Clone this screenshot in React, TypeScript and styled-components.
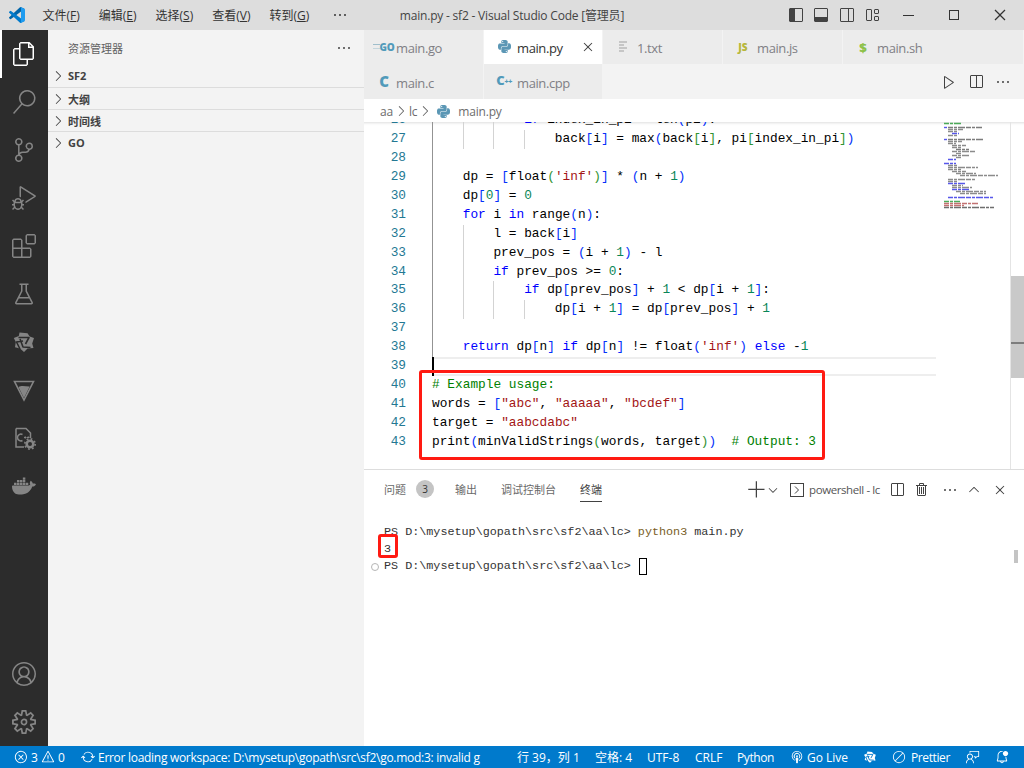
import React from 'react'
import styled, { createGlobalStyle } from 'styled-components'
import {
  VscFiles, VscSearch, VscSourceControl, VscDebugAlt, VscExtensions, VscBeaker, VscAccount,
  VscSettingsGear, VscLayoutSidebarLeft, VscLayoutPanel, VscLayoutSidebarRightOff, VscLayout,
  VscChromeMinimize, VscChromeMaximize, VscChromeClose, VscClose, VscEllipsis, VscChevronRight,
  VscChevronDown, VscChevronUp, VscAdd, VscTrash, VscPlay, VscSplitHorizontal,
  VscError, VscWarning, VscSync, VscBroadcast, VscFeedback, VscBellDot, VscCircleSlash,
} from 'react-icons/vsc'
import { SiPython, SiDocker } from 'react-icons/si'

const UI_FONT = `"Open Sans", "Noto Sans CJK SC", sans-serif`
const MONO_FONT = `"Liberation Mono", "Noto Sans CJK SC", monospace`
const CHAR = 7.68

const GlobalStyle = createGlobalStyle`
  html, body { margin: 0; padding: 0; background: #fff; }
  * { box-sizing: border-box; }
`

const Shell = styled.div`
  display: flex;
  flex-direction: column;
  width: 1024px;
  height: 768px;
  overflow: hidden;
  font-family: ${UI_FONT};
`

const TitleBar = styled.div`
  display: flex;
  align-items: center;
  height: 30px;
  flex: none;
  background: #dddddd;
  color: #333;
  font-size: 12px;
`

const Logo = styled.svg`
  width: 16px;
  height: 16px;
  margin-left: 9px;
  margin-right: 8px;
  flex: none;
`

const MenuItem = styled.div`
  padding: 0 9.5px;
  white-space: nowrap;
  u { text-underline-offset: 1px; }
`

const MenuMore = styled(VscEllipsis)`
  width: 16px;
  height: 16px;
  margin-left: 13px;
  margin-right: 52px;
`

const WindowTitle = styled.div`
  width: 383px;
  white-space: nowrap;
  letter-spacing: -0.2px;
  color: #444;
`

const LayoutIcon = styled.div`
  display: flex;
  width: 25.5px;
  justify-content: center;
  color: #424242;
  svg { width: 16px; height: 16px; }
`

const WindowButton = styled.div`
  display: flex;
  width: 46px;
  justify-content: center;
  color: #333;
  svg { width: 16px; height: 16px; }
`

const Body = styled.div`
  display: flex;
  flex: 1;
  min-height: 0;
`

const ActivityBar = styled.div`
  display: flex;
  flex-direction: column;
  width: 48px;
  flex: none;
  background: #2c2c2c;
`

const ActivitySpacer = styled.div`
  flex: 1;
`

const ActivityItem = styled.div<{ $active?: boolean }>`
  display: flex;
  align-items: center;
  justify-content: center;
  width: 48px;
  height: 48px;
  flex: none;
  color: ${p => (p.$active ? '#ffffff' : '#858585')};
  border-left: 2px solid ${p => (p.$active ? '#ffffff' : 'transparent')};
  padding-right: 2px;
  svg { width: 24px; height: 24px; }
`

const Sidebar = styled.div`
  display: flex;
  flex-direction: column;
  width: 316px;
  flex: none;
  background: #f3f3f3;
  color: #616161;
`

const SidebarHeader = styled.div`
  display: flex;
  align-items: center;
  justify-content: space-between;
  height: 35px;
  padding-left: 20px;
  padding-right: 12px;
  font-size: 11px;
  svg { width: 16px; height: 16px; color: #424242; }
`

const SectionRow = styled.div<{ $first?: boolean }>`
  display: flex;
  align-items: center;
  height: 22px;
  padding-left: 2px;
  padding-bottom: ${p => (p.$first ? 2 : 0)}px;
  font-size: 11px;
  font-weight: 700;
  color: #424242;
  border-top: 1px solid ${p => (p.$first ? 'transparent' : '#dcdcdc')};
  svg { width: 16px; height: 16px; margin-right: 2px; margin-top: 1px; }
`

const Main = styled.div`
  display: flex;
  flex-direction: column;
  flex: 1;
  min-width: 0;
`

const TabRow = styled.div<{ $h: number }>`
  display: flex;
  height: ${p => p.$h}px;
  flex: none;
  background: #f3f3f3;
`

const Tab = styled.div<{ $active?: boolean; $w?: number }>`
  display: flex;
  align-items: center;
  width: ${p => p.$w ?? 120}px;
  flex: none;
  padding-left: 12px;
  padding-top: 2px;
  font-size: 13px;
  letter-spacing: -0.4px;
  color: ${p => (p.$active ? '#333333' : '#7f7f85')};
  background: ${p => (p.$active ? '#ffffff' : '#ececec')};
  border-right: 1px solid #f3f3f3;
  white-space: nowrap;
`

const TabIconBox = styled.span<{ $mr?: number }>`
  display: inline-flex;
  align-items: center;
  justify-content: center;
  width: 16px;
  height: 16px;
  margin-right: ${p => p.$mr ?? 6}px;
  margin-top: -3px;
  flex: none;
  font-weight: 800;
  letter-spacing: 0;
`

const GoGlyph = styled.span`
  display: inline-flex;
  align-items: center;
  flex: none;
  font-size: 10px;
  font-weight: 800;
  color: #519aba;
  letter-spacing: -0.2px;
  margin-left: -1px;
  &::before {
    content: '';
    width: 7px;
    height: 3px;
    border-top: 1px solid #9fbecb;
    border-bottom: 1px solid #c3d5dc;
  }
`

const LetterGlyph = styled.span<{ $color: string; $size: number }>`
  color: ${p => p.$color};
  font-size: ${p => p.$size}px;
  line-height: 16px;
  white-space: nowrap;
`

const PlusSup = styled.span`
  font-size: 7px;
  position: relative;
  top: -1px;
  letter-spacing: -0.5px;
`

const TabClose = styled(VscClose)`
  width: 16px;
  height: 16px;
  margin-left: auto;
  margin-right: 6px;
  margin-top: -3px;
  color: #424242;
`

const EditorActions = styled.div`
  display: flex;
  flex: 1;
  align-items: center;
  justify-content: flex-end;
  gap: 11px;
  padding-right: 13px;
  color: #424242;
  svg { width: 16px; height: 16px; }
`

const Breadcrumb = styled.div`
  display: flex;
  align-items: center;
  height: 23px;
  flex: none;
  padding-left: 16px;
  padding-top: 1px;
  font-size: 12px;
  letter-spacing: -0.2px;
  color: #6c6c6c;
  background: #fff;
  svg { width: 16px; height: 16px; color: #616161; }
`

const CrumbPython = styled(SiPython)`
  && { width: 13px; height: 13px; color: #5b97b5; margin: 0 8px 0 4px; }
`

const Editor = styled.div`
  position: relative;
  display: flex;
  flex: 1;
  min-height: 0;
  background: #fff;
  overflow: hidden;
  box-shadow: inset 0 4px 3px -3px #dddddd;
`

const CodeColumn = styled.div`
  width: 572px;
  flex: none;
  margin-top: -11px;
  font-family: ${MONO_FONT};
  font-size: 12.8px;
`

const CodeLine = styled.div`
  display: flex;
  height: 18.94px;
  line-height: 18.94px;
  white-space: pre;
  position: relative;
`

const LineNo = styled.div`
  width: 42px;
  flex: none;
  text-align: right;
  color: #237893;
`

const GutterGap = styled.div`
  width: 26px;
  flex: none;
`

const CodeText = styled.div<{ $guides: number; $dark?: boolean; $current?: boolean }>`
  flex: 1;
  color: #000;
  background-repeat: no-repeat;
  background-image:
    ${p => (p.$dark ? 'linear-gradient(#939393, #939393)' : 'linear-gradient(transparent, transparent)')},
    ${p => (p.$guides > 1 ? 'linear-gradient(#d3d3d3, #d3d3d3)' : 'linear-gradient(transparent, transparent)')},
    ${p => (p.$guides > 2 ? 'linear-gradient(#d3d3d3, #d3d3d3)' : 'linear-gradient(transparent, transparent)')},
    ${p => (p.$guides > 3 ? 'linear-gradient(#d3d3d3, #d3d3d3)' : 'linear-gradient(transparent, transparent)')};
  background-size: 1px 100%;
  background-position: 0 0, ${CHAR * 4}px 0, ${CHAR * 8}px 0, ${CHAR * 12}px 0;
  ${p => p.$current && `
    border-top: 2px solid #eeeeee;
    border-bottom: 2px solid #eeeeee;
    line-height: 15px;
  `}
`

const Cursor = styled.div`
  position: absolute;
  left: 68px;
  top: 0;
  width: 2px;
  height: 19px;
  background: #000;
`

const Callout = styled.div<{ $l: number; $t: number; $w: number; $h: number }>`
  position: absolute;
  left: ${p => p.$l}px;
  top: ${p => p.$t}px;
  width: ${p => p.$w}px;
  height: ${p => p.$h}px;
  border: 3px solid #ff1a12;
  border-radius: 3px;
  pointer-events: none;
`

const Minimap = styled.svg`
  width: 74px;
  height: 100px;
  flex: none;
`

const ScrollTrack = styled.div`
  position: relative;
  flex: none;
  width: 14px;
  margin-left: auto;
  border-left: 1px solid #e4e4e4;
`

const ScrollThumb = styled.div`
  position: absolute;
  left: 0;
  right: 0;
  top: 154px;
  height: 102px;
  background: #c9c9c9;
  &::after {
    content: '';
    position: absolute;
    left: 0;
    right: 0;
    top: 66px;
    height: 2px;
    background: #7d7d7d;
  }
`

const Panel = styled.div`
  display: flex;
  flex-direction: column;
  height: 277px;
  flex: none;
  background: #fff;
  border-top: 1px solid #dddddd;
`

const PanelHeader = styled.div`
  display: flex;
  align-items: center;
  height: 35px;
  flex: none;
  padding-left: 20px;
  padding-right: 12px;
  padding-top: 4px;
  font-size: 11px;
  color: #6a6a6a;
`

const PanelTab = styled.div<{ $active?: boolean; $gap: number }>`
  display: flex;
  align-items: center;
  height: 24px;
  margin-right: ${p => p.$gap}px;
  color: ${p => (p.$active ? '#424242' : '#6a6a6a')};
  border-bottom: 1px solid ${p => (p.$active ? '#424242' : 'transparent')};
  white-space: nowrap;
`

const Badge = styled.span`
  display: inline-flex;
  align-items: center;
  justify-content: center;
  width: 18px;
  height: 18px;
  margin-left: 10px;
  border-radius: 50%;
  background: #c4c4c4;
  color: #333;
  font-size: 10px;
`

const PanelActions = styled.div`
  display: flex;
  align-items: center;
  margin-left: auto;
  color: #424242;
  svg { flex: none; }
`

const PanelAction = styled.span<{ $w: number; $size?: number; $nudge?: number }>`
  display: inline-flex;
  justify-content: center;
  width: ${p => p.$w}px;
  flex: none;
  padding-left: ${p => p.$nudge ?? 0}px;
  svg { width: ${p => p.$size ?? 16}px; height: ${p => p.$size ?? 16}px; }
`

const ShellLabel = styled.span`
  width: 81px;
  font-size: 11.5px;
  letter-spacing: -0.4px;
  color: #555;
  white-space: nowrap;
`

const Terminal = styled.div`
  position: relative;
  flex: 1;
  padding-top: 19px;
  padding-left: 20px;
  font-family: ${MONO_FONT};
  font-size: 11.75px;
  line-height: 17px;
  color: #333;
  white-space: pre;
`

const TermLine = styled.div`
  position: relative;
  height: 17px;
`

const TermCmd = styled.span`
  color: #795e26;
`

const TermCaret = styled.span`
  display: inline-block;
  width: 8px;
  height: 17px;
  margin-left: 1px;
  vertical-align: top;
  border: 1px solid #000;
`

const PromptDot = styled.span`
  position: absolute;
  left: -13px;
  top: 5px;
  width: 8px;
  height: 8px;
  border: 1px solid #b5b5b5;
  border-radius: 50%;
`

const TermScroll = styled.div`
  position: absolute;
  right: 6px;
  top: 45px;
  width: 4px;
  height: 13px;
  background: #c4c4c4;
`

const StatusBar = styled.div`
  display: flex;
  align-items: center;
  height: 22px;
  flex: none;
  background: #007acc;
  color: #fff;
  font-size: 12px;
  white-space: nowrap;
  svg { width: 14px; height: 14px; flex: none; }
`

const StatusItem = styled.div<{ $w: number; $pl?: number; $gap?: number }>`
  display: flex;
  align-items: center;
  gap: ${p => p.$gap ?? 3}px;
  width: ${p => p.$w}px;
  flex: none;
  padding-left: ${p => p.$pl ?? 0}px;
`

const ErrorText = styled.span`
  letter-spacing: -0.29px;
`

const TightText = styled.span`
  letter-spacing: -0.4px;
`

// {k:keyword} {n:number} {s:string} {c:comment} {1:bracket} {2:bracket}
const TOKEN_COLORS: Record<string, string> = {
  k: '#0000ff',
  n: '#098658',
  s: '#a31515',
  c: '#008000',
  '1': '#0431fa',
  '2': '#319331',
}

const renderCode = (src: string) =>
  src.split(/(\{[knsc12]:[^}]*\})/).map((part, i) => {
    const m = part.match(/^\{(.):([^}]*)\}$/)
    if (!m) return <span key={i}>{part}</span>
    return <span key={i} style={{ color: TOKEN_COLORS[m[1]] }}>{m[2]}</span>
  })

const LINES: { no: number; src: string; guides: number; dark?: boolean }[] = [
  { no: 26, src: '            {k:if} index_in_pi < len{1:(}pi{1:)}:', guides: 3, dark: true },
  { no: 27, src: '                back{1:[}i{1:]} = max{1:(}back{2:[}i{2:]}, pi{2:[}index_in_pi{2:]}{1:)}', guides: 4, dark: true },
  { no: 28, src: '', guides: 1, dark: true },
  { no: 29, src: "    dp = {1:[}float{2:(}{s:'inf'}{2:)}{1:]} * {1:(}n + {n:1}{1:)}", guides: 1, dark: true },
  { no: 30, src: '    dp{1:[}{n:0}{1:]} = {n:0}', guides: 1, dark: true },
  { no: 31, src: '    {k:for} i {k:in} range{1:(}n{1:)}:', guides: 1, dark: true },
  { no: 32, src: '        l = back{1:[}i{1:]}', guides: 2, dark: true },
  { no: 33, src: '        prev_pos = {1:(}i + {n:1}{1:)} - l', guides: 2, dark: true },
  { no: 34, src: '        {k:if} prev_pos >= {n:0}:', guides: 2, dark: true },
  { no: 35, src: '            {k:if} dp{1:[}prev_pos{1:]} + {n:1} < dp{1:[}i + {n:1}{1:]}:', guides: 3, dark: true },
  { no: 36, src: '                dp{1:[}i + {n:1}{1:]} = dp{1:[}prev_pos{1:]} + {n:1}', guides: 4, dark: true },
  { no: 37, src: '', guides: 1, dark: true },
  { no: 38, src: "    {k:return} dp{1:[}n{1:]} {k:if} dp{1:[}n{1:]} != float{1:(}{s:'inf'}{1:)} {k:else} -{n:1}", guides: 1, dark: true },
  { no: 39, src: '', guides: 0 },
  { no: 40, src: '{c:# Example usage:}', guides: 0 },
  { no: 41, src: 'words = {1:[}{s:"abc"}, {s:"aaaaa"}, {s:"bcdef"}{1:]}', guides: 0 },
  { no: 42, src: 'target = {s:"aabcdabc"}', guides: 0 },
  { no: 43, src: 'print{1:(}minValidStrings{2:(}words, target{2:)}{1:)}  {c:# Output: 3}', guides: 0 },
]

// [line, indent, length, colour] for the minimap
const MINI: [number, number, number, string][] = [
  [0, 0, 18, '#2f9f3f'], [2, 0, 3, '#3a3ae8'], [2, 4, 34, '#666'], [3, 4, 15, '#777'], [4, 4, 9, '#777'],
  [5, 8, 7, '#3a3ae8'], [6, 4, 10, '#777'], [8, 0, 3, '#3a3ae8'], [8, 4, 36, '#666'], [9, 4, 14, '#777'],
  [10, 4, 8, '#777'], [11, 8, 14, '#777'], [12, 8, 10, '#777'], [13, 12, 13, '#666'], [14, 8, 24, '#777'],
  [15, 12, 6, '#777'], [16, 8, 18, '#777'], [17, 12, 5, '#777'], [18, 4, 8, '#3a3ae8'], [20, 0, 12, '#3a3ae8'],
  [21, 4, 10, '#777'], [22, 4, 30, '#777'], [23, 4, 13, '#777'], [24, 8, 14, '#777'], [25, 12, 20, '#777'],
  [26, 16, 38, '#777'], [28, 4, 28, '#777'], [29, 4, 9, '#777'], [30, 4, 18, '#3a3ae8'], [31, 8, 11, '#777'],
  [32, 8, 20, '#777'], [33, 8, 17, '#3a3ae8'], [34, 12, 30, '#777'], [35, 16, 26, '#777'], [37, 4, 46, '#3a3ae8'],
  [39, 0, 16, '#2f9f3f'], [40, 0, 34, '#b95a5a'], [41, 0, 20, '#b95a5a'], [42, 0, 50, '#555'],
]

const MinimapPreview = () => (
  <Minimap viewBox="0 0 74 100">
    {MINI.map(([line, indent, len, color], i) => (
      <line
        key={i}
        x1={8 + indent}
        x2={8 + indent + len}
        y1={1.5 + line * 2}
        y2={1.5 + line * 2}
        stroke={color}
        strokeWidth={1.4}
        strokeDasharray="5 1 3 1 7 1"
        opacity={0.85}
      />
    ))}
  </Minimap>
)

const PythonIcon = () => <SiPython size={13} color="#5b97b5" />

const TxtIcon = () => (
  <svg width="14" height="14" viewBox="0 0 14 14">
    <path d="M3 2h8M3 5h5M3 8h8M3 11h5" stroke="#b9b9b9" strokeWidth="1.4" fill="none" />
  </svg>
)

const StarIcon = ({ cut }: { cut: string }) => (
  <svg viewBox="0 0 24 24">
    <path
      fill="currentColor"
      d="M7.500 2.500l8 .8 2.200 3.200 4.300 1.500-1.800 5.500 1.300 4.500-6 .6-3.500 3.400-4-3.600-5-1.200.8-5.200L1.800 8l5-2z"
    />
    <path
      fill="none"
      stroke={cut}
      strokeWidth="1.600"
      strokeLinejoin="round"
      d="M6.500 7.500h10.500l-3.500 6.500M8 19l-3.500-7 6.500-1M18.500 17.500l-7.500-.5-3-8"
    />
  </svg>
)

const FileGearIcon = ({ cut }: { cut: string }) => (
  <svg viewBox="0 0 24 24" fill="none" stroke="currentColor">
    <path d="M4 2.500h10L18.500 7v5M4 2.500V21h8" strokeWidth="1.500" />
    <path d="M10.500 8.500a3.400 3.400 0 1 0 0 6" strokeWidth="1.500" />
    <path d="M12 11.500h2.500M13.200 10.300v2.400M15 11.500h2.500M16.200 10.300v2.400" strokeWidth="1" />
    <circle cx="18" cy="18" r="6" fill={cut} stroke="none" />
    <circle cx="18" cy="18" r="3.300" strokeWidth="2.600" />
    <circle cx="18" cy="18" r="5.200" strokeWidth="1.600" strokeDasharray="1.800 2.280" />
  </svg>
)

const TriangleIcon = () => (
  <svg viewBox="0 0 24 24">
    <path d="M2.500 3.500h19L12 22z" fill="none" stroke="currentColor" strokeWidth="1.600" />
    <path d="M6.500 9c3-1.800 7-.5 11.200-.6L12 20z" fill="currentColor" />
  </svg>
)

const TerminalBoxIcon = () => (
  <svg viewBox="0 0 16 16" fill="none" stroke="currentColor">
    <rect x="1.500" y="1.500" width="13" height="13" />
    <path d="M6 4.500 9.500 8 6 11.500" />
  </svg>
)

const VSCodeLogo = () => (
  <Logo viewBox="0 0 24 24">
    <path fill="#0065a9" d="M23.100 2.600 18.200.2a1.500 1.500 0 0 0-1.700.3L.3 15.300a1 1 0 0 0 0 1.500l1.400 1.200a1 1 0 0 0 1.300.1L22.100 3.600z" />
    <path fill="#007acc" d="m23.100 21.400-4.900 2.400a1.500 1.500 0 0 1-1.700-.3L.3 8.700a1 1 0 0 1 0-1.500L1.700 6a1 1 0 0 1 1.300-.1l19.100 14.500z" />
    <path fill="#1f9cf0" d="M18.200 23.800a1.500 1.500 0 0 1-1.700-.3c.6.600 1.500.2 1.500-.6V1.100c0-.8-1-1.200-1.500-.6a1.500 1.500 0 0 1 1.700-.3l4.900 2.400c.5.200.9.800.9 1.400v16c0 .6-.4 1.200-.9 1.400z" />
  </Logo>
)

const App: React.FunctionComponent = () => {
  return (
    <Shell>
      <GlobalStyle />
      <TitleBar>
        <VSCodeLogo />
        <MenuItem>文件(<u>F</u>)</MenuItem>
        <MenuItem>编辑(<u>E</u>)</MenuItem>
        <MenuItem>选择(<u>S</u>)</MenuItem>
        <MenuItem>查看(<u>V</u>)</MenuItem>
        <MenuItem>转到(<u>G</u>)</MenuItem>
        <MenuMore />
        <WindowTitle>main.py - sf2 - Visual Studio Code [管理员]</WindowTitle>
        <LayoutIcon><VscLayoutSidebarLeft /></LayoutIcon>
        <LayoutIcon><VscLayoutPanel /></LayoutIcon>
        <LayoutIcon><VscLayoutSidebarRightOff /></LayoutIcon>
        <LayoutIcon><VscLayout /></LayoutIcon>
        <WindowButton><VscChromeMinimize /></WindowButton>
        <WindowButton><VscChromeMaximize /></WindowButton>
        <WindowButton><VscChromeClose /></WindowButton>
      </TitleBar>

      <Body>
        <ActivityBar>
          <ActivityItem $active><VscFiles /></ActivityItem>
          <ActivityItem><VscSearch /></ActivityItem>
          <ActivityItem><VscSourceControl /></ActivityItem>
          <ActivityItem><VscDebugAlt /></ActivityItem>
          <ActivityItem><VscExtensions /></ActivityItem>
          <ActivityItem><VscBeaker /></ActivityItem>
          <ActivityItem><StarIcon cut="#2c2c2c" /></ActivityItem>
          <ActivityItem><TriangleIcon /></ActivityItem>
          <ActivityItem><FileGearIcon cut="#2c2c2c" /></ActivityItem>
          <ActivityItem><SiDocker /></ActivityItem>
          <ActivitySpacer />
          <ActivityItem><VscAccount /></ActivityItem>
          <ActivityItem><VscSettingsGear /></ActivityItem>
        </ActivityBar>

        <Sidebar>
          <SidebarHeader>
            <span>资源管理器</span>
            <VscEllipsis />
          </SidebarHeader>
          <SectionRow $first><VscChevronRight /><span>SF2</span></SectionRow>
          <SectionRow><VscChevronRight /><span>大纲</span></SectionRow>
          <SectionRow><VscChevronRight /><span>时间线</span></SectionRow>
          <SectionRow><VscChevronRight /><span>GO</span></SectionRow>
        </Sidebar>

        <Main>
          <TabRow $h={34}>
            <Tab><TabIconBox $mr={4}><GoGlyph>GO</GoGlyph></TabIconBox>main.go</Tab>
            <Tab $active $w={119}><TabIconBox $mr={5}><PythonIcon /></TabIconBox>main.py<TabClose /></Tab>
            <Tab><TabIconBox><TxtIcon /></TabIconBox>1.txt</Tab>
            <Tab><TabIconBox><LetterGlyph $color="#b7b73b" $size={10}>JS</LetterGlyph></TabIconBox>main.js</Tab>
            <Tab $w={181}><TabIconBox><LetterGlyph $color="#8dc149" $size={13}>$</LetterGlyph></TabIconBox>main.sh</Tab>
          </TabRow>
          <TabRow $h={35}>
            <Tab><TabIconBox $mr={4}><LetterGlyph $color="#519aba" $size={15}>C</LetterGlyph></TabIconBox>main.c</Tab>
            <Tab $w={119}><TabIconBox $mr={5}><LetterGlyph $color="#519aba" $size={13}>C<PlusSup>++</PlusSup></LetterGlyph></TabIconBox>main.cpp</Tab>
            <EditorActions>
              <VscPlay />
              <VscSplitHorizontal />
              <VscEllipsis />
            </EditorActions>
          </TabRow>
          <Breadcrumb>
            aa<VscChevronRight />lc<VscChevronRight /><CrumbPython />main.py
          </Breadcrumb>
          <Editor>
            <CodeColumn>
              {LINES.map(line => (
                <CodeLine key={line.no}>
                  <LineNo>{line.no}</LineNo>
                  <GutterGap />
                  <CodeText $guides={line.guides} $dark={line.dark} $current={line.no === 39}>
                    {renderCode(line.src)}
                  </CodeText>
                  {line.no === 39 && <Cursor />}
                </CodeLine>
              ))}
            </CodeColumn>
            <MinimapPreview />
            <ScrollTrack><ScrollThumb /></ScrollTrack>
            <Callout $l={55} $t={248} $w={406} $h={90} />
          </Editor>
          <Panel>
            <PanelHeader>
              <PanelTab $gap={21}>问题<Badge>3</Badge></PanelTab>
              <PanelTab $gap={24}>输出</PanelTab>
              <PanelTab $gap={24}>调试控制台</PanelTab>
              <PanelTab $active $gap={0}>终端</PanelTab>
              <PanelActions>
                <PanelAction $w={16} $size={20}><VscAdd /></PanelAction>
                <PanelAction $w={16} $size={14}><VscChevronDown /></PanelAction>
                <PanelAction $w={28} $nudge={4}><TerminalBoxIcon /></PanelAction>
                <ShellLabel>powershell - lc</ShellLabel>
                <PanelAction $w={14}><VscSplitHorizontal /></PanelAction>
                <PanelAction $w={36}><VscTrash /></PanelAction>
                <PanelAction $w={20}><VscEllipsis /></PanelAction>
                <PanelAction $w={28}><VscChevronUp /></PanelAction>
                <PanelAction $w={24}><VscClose /></PanelAction>
              </PanelActions>
            </PanelHeader>
            <Terminal>
              <TermLine>PS D:\mysetup\gopath\src\sf2\aa\lc&gt; <TermCmd>python3</TermCmd> main.py</TermLine>
              <TermLine>3</TermLine>
              <TermLine><PromptDot />PS D:\mysetup\gopath\src\sf2\aa\lc&gt; <TermCaret /></TermLine>
              <Callout $l={14} $t={29} $w={20} $h={24} />
              <TermScroll />
            </Terminal>
          </Panel>
        </Main>
      </Body>

      <StatusBar>
        <StatusItem $w={81} $pl={14}><VscError /><span>3</span><VscWarning /><span>0</span></StatusItem>
        <StatusItem $w={429} $gap={3}><VscSync /><ErrorText>Error loading workspace: D:\mysetup\gopath\src\sf2\go.mod:3: invalid g</ErrorText></StatusItem>
        <StatusItem $w={85} $pl={7}>行 39，列 1</StatusItem>
        <StatusItem $w={52}>空格: 4</StatusItem>
        <StatusItem $w={48}>UTF-8</StatusItem>
        <StatusItem $w={42}>CRLF</StatusItem>
        <StatusItem $w={53}><TightText>Python</TightText></StatusItem>
        <StatusItem $w={73}><VscBroadcast /><span>Go Live</span></StatusItem>
        <StatusItem $w={29}><StarIcon cut="#007acc" /></StatusItem>
        <StatusItem $w={74} $gap={5}><VscCircleSlash /><TightText>Prettier</TightText></StatusItem>
        <StatusItem $w={29}><VscFeedback /></StatusItem>
        <StatusItem $w={20}><VscBellDot /></StatusItem>
      </StatusBar>
    </Shell>
  )
}

export default App
